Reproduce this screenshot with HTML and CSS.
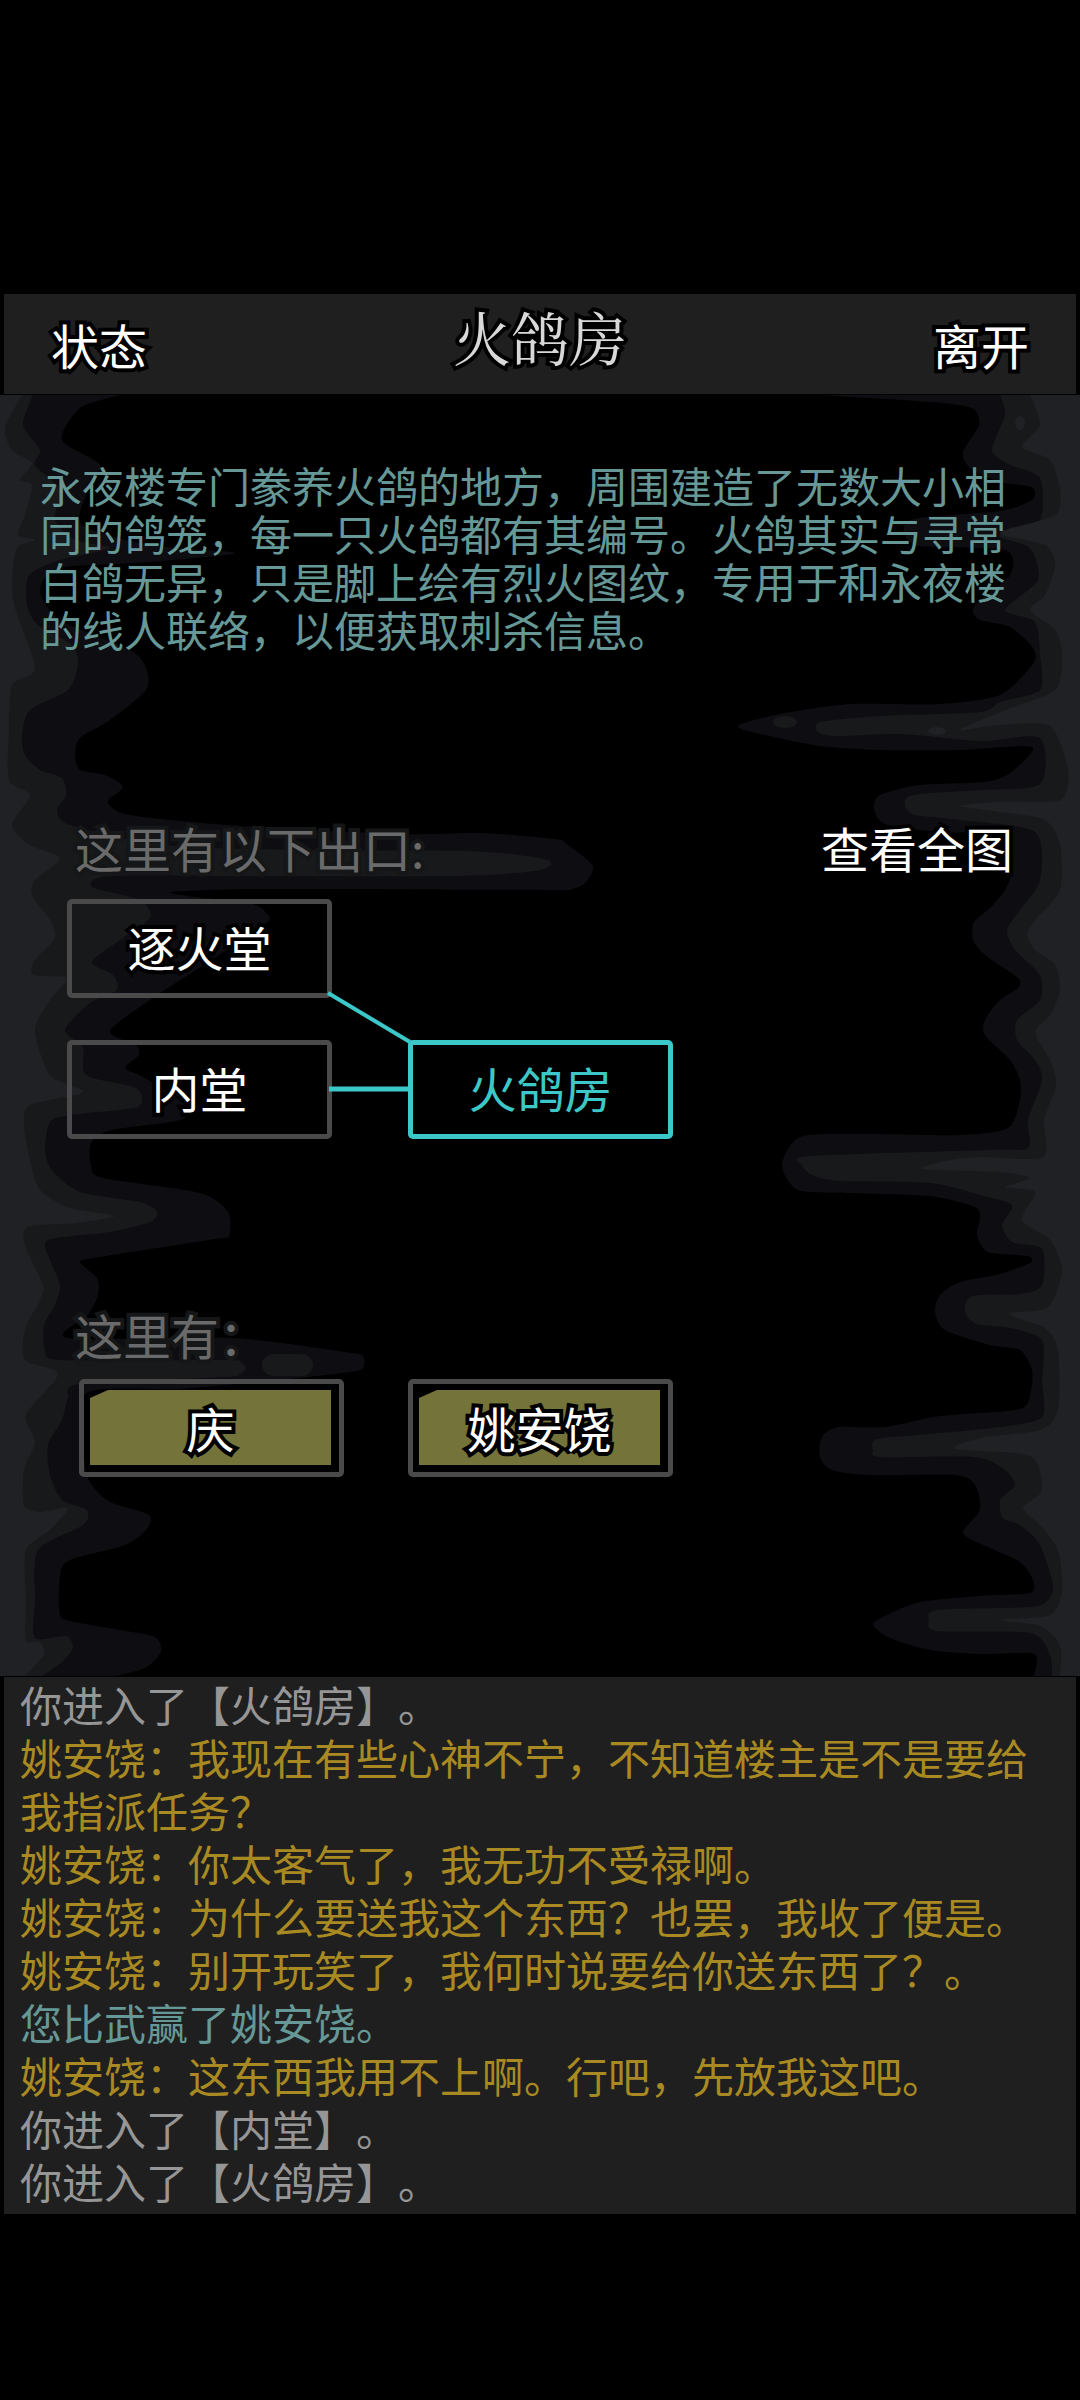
FILE: index.html
```html
<!DOCTYPE html>
<html lang="zh-CN">
<head>
    <meta charset="UTF-8">
    <meta name="viewport" content="width=device-width, initial-scale=1.0">
    <title>火鸽房</title>
    <link rel="stylesheet" href="styles.css">
</head>

<body>
    <!-- 顶部栏 -->
    <header class="topbar">
        <button type="button" class="text-btn">状态</button>
        <h1>火鸽房</h1>
        <button type="button" class="text-btn">离开</button>
    </header>

    <!-- 场景 -->
    <main class="scene">
        <svg class="cave" viewBox="0 395 1080 1281" preserveAspectRatio="none" aria-hidden="true">
            <g id="cave"></g>
            <rect x="262" y="1354" width="51" height="22" rx="12" fill="#18191b"/>
            <ellipse cx="785" cy="722" rx="12" ry="6" fill="#18191b"/>
            <ellipse cx="937" cy="731" rx="9" ry="4" fill="#1f2124"/>
            <ellipse cx="1020" cy="423" rx="5" ry="7" fill="#1f2124"/>
        </svg>

        <p class="desc">永夜楼专门豢养火鸽的地方，周围建造了无数大小相同的鸽笼，每一只火鸽都有其编号。火鸽其实与寻常白鸽无异，只是脚上绘有烈火图纹，专用于和永夜楼的线人联络，以便获取刺杀信息。</p>

        <section class="exits">
            <div class="section-head">
                <h2>这里有以下出口:</h2>
                <button type="button" class="text-btn">查看全图</button>
            </div>
            <div class="map">
                <svg class="links" viewBox="0 0 605 240" aria-hidden="true">
                    <path d="M261 94L343 143" stroke-width="4"/>
                    <path d="M262 190H343" stroke-width="5"/>
                </svg>
                <button type="button" class="box">逐火堂</button>
                <button type="button" class="box row-2">内堂</button>
                <button type="button" class="box row-2 current">火鸽房</button>
            </div>
        </section>

        <section class="people">
            <h2>这里有：</h2>
            <div class="people-list">
                <button type="button" class="box person"><span>庆</span></button>
                <button type="button" class="box person"><span>姚安饶</span></button>
            </div>
        </section>
    </main>

    <!-- 消息记录 -->
    <section class="log">
        <p>你进入了【火鸽房】。</p>
        <p class="talk">姚安饶：我现在有些心神不宁，不知道楼主是不是要给我指派任务？</p>
        <p class="talk">姚安饶：你太客气了，我无功不受禄啊。</p>
        <p class="talk">姚安饶：为什么要送我这个东西？也罢，我收了便是。</p>
        <p class="talk">姚安饶：别开玩笑了，我何时说要给你送东西了？。</p>
        <p class="win">您比武赢了姚安饶。</p>
        <p class="talk">姚安饶：这东西我用不上啊。行吧，先放我这吧。</p>
        <p>你进入了【内堂】。</p>
        <p>你进入了【火鸽房】。</p>
    </section>

<script>
    // 洞壁轮廓，从外到内三层，左右各一条
    const layers = [
        { side: 0, color: '#0e0d12', points: '120,395 80,408 62,440 100,465 88,490 82,525 150,545 235,553 150,562 60,568 40,590 60,620 130,650 146,668 146,690 110,720 80,738 75,755 80,770 105,775 123,787 108,802 130,815 240,826 400,834 480,833 555,839 568,845 593,866 585,883 572,889 550,890 260,889 172,892 195,897 250,903 267,914 264,925 185,977 150,1000 110,1031 137,1046 138,1056 125,1068 145,1078 185,1105 180,1120 112,1130 91,1143 91,1166 103,1178 200,1193 228,1212 229,1236 215,1239 100,1257 80,1262 97,1278 98,1295 88,1315 68,1338 232,1338 345,1352 363,1356 363,1368 350,1372 280,1380 180,1389 85,1394 85,1465 92,1485 110,1502 149,1515 146,1530 125,1545 70,1560 60,1575 60,1615 75,1622 120,1630 155,1637 161,1652 145,1668 115,1676' },
        { side: 0, color: '#18191b', points: '33,395 23,425 40,450 35,465 60,490 55,520 75,540 110,548 60,560 29,575 27,605 38,625 72,645 78,665 68,690 30,710 22,735 25,755 40,770 62,778 66,795 57,810 70,825 160,845 300,850 469,851 540,858 551,864 535,871 460,876 250,876 110,876 92,887 140,900 150,918 120,940 92,962 113,975 117,990 90,1003 65,1030 83,1047 86,1075 134,1087 142,1098 134,1108 70,1115 50,1122 45,1150 52,1170 80,1192 140,1202 157,1212 150,1222 110,1232 48,1240 50,1260 60,1285 55,1305 44,1325 45,1350 62,1360 225,1360 240,1362 246,1368 240,1374 225,1377 80,1384 68,1398 62,1420 48,1445 50,1475 62,1500 87,1510 83,1525 38,1550 35,1600 35,1638 66,1636 73,1648 62,1662 42,1676' },
        { side: 0, color: '#1f2124', points: '22,395 5,428 12,450 32,463 20,480 32,485 25,515 18,535 35,540 16,550 13,600 35,668 12,685 9,730 9,780 30,795 12,825 30,845 60,858 35,880 32,895 50,920 55,938 35,960 33,975 67,978 50,1000 35,1030 50,1075 83,1092 30,1105 24,1125 30,1160 40,1190 70,1208 115,1216 75,1223 28,1227 25,1245 43,1285 40,1300 25,1330 25,1360 58,1374 26,1415 35,1442 24,1470 24,1505 40,1512 68,1508 50,1530 26,1550 26,1600 26,1640 40,1642 44,1655 25,1676' },
        { side: 1080, color: '#0e0d12', points: '820,395 930,402 972,408 979,425 963,452 970,468 1000,482 1032,487 1032,500 1000,511 910,520 915,545 1005,550 1010,575 975,605 978,619 1010,627 1033,648 1033,664 1000,695 940,704 850,704 780,714 738,726 765,735 820,746 880,750 960,750 1032,747 1010,773 985,782 920,785 880,795 874,808 885,824 940,832 1005,835 1012,870 1005,890 990,908 974,922 973,940 985,955 1018,978 1018,988 1000,1000 985,1020 985,1035 1010,1060 1020,1080 1020,1100 1008,1128 960,1135 860,1134 800,1137 782,1165 798,1190 850,1193 930,1196 975,1207 980,1218 977,1235 988,1252 1028,1256 1030,1263 1000,1274 960,1282 940,1295 935,1312 945,1330 990,1345 1020,1350 1032,1370 1031,1390 1020,1409 940,1416 885,1427 838,1427 822,1437 820,1457 832,1470 870,1475 955,1475 975,1485 980,1510 963,1533 990,1548 1020,1562 1033,1580 1030,1593 980,1596 920,1602 885,1616 873,1625 890,1638 930,1650 980,1654 1034,1654 1034,1676' },
        { side: 1080, color: '#18191b', points: '1000,395 1005,415 992,450 1010,465 1040,478 1040,520 1010,528 1000,537 1030,548 1038,580 1005,610 1035,622 1040,655 1040,690 1000,702 980,712 880,716 820,722 818,732 835,736 900,734 980,741 1040,738 1040,784 980,790 912,795 905,806 915,815 960,820 1035,832 1040,880 1020,910 1007,930 1015,950 1040,975 1040,1000 1017,1020 1017,1040 1035,1060 1042,1080 1028,1120 1028,1148 990,1150 810,1156 802,1165 812,1175 840,1181 930,1183 980,1195 1012,1205 1002,1225 1012,1242 1042,1249 1042,1285 1020,1294 972,1296 965,1312 977,1324 1010,1328 1042,1340 1042,1380 1042,1417 1000,1427 930,1434 877,1439 873,1450 880,1457 975,1457 1005,1470 1015,1485 1000,1500 1003,1518 1020,1525 1040,1545 1053,1585 1048,1600 1030,1607 937,1610 929,1620 937,1631 1030,1633 1050,1655 1052,1676' },
        { side: 1080, color: '#1f2124', points: '1030,395 1040,425 1022,447 1050,460 1060,490 1055,515 1000,533 1045,545 1055,565 1045,595 1030,610 1055,630 1062,655 1055,690 1000,712 960,730 1000,725 1050,726 1068,770 1060,800 1000,802 960,806 1000,812 1045,820 1060,845 1060,890 1035,920 1027,935 1035,950 1055,965 1060,990 1050,1015 1035,1032 1050,1060 1056,1085 1044,1120 1043,1157 980,1157 950,1160 922,1169 1000,1172 1030,1178 1005,1187 1035,1192 1022,1220 1050,1240 1062,1270 1048,1307 1010,1313 1020,1319 1045,1328 1058,1350 1058,1410 1040,1430 980,1438 955,1449 1030,1456 1042,1490 1023,1508 1040,1525 1058,1550 1062,1590 1050,1615 1000,1620 1040,1626 1060,1645 1060,1676' }
    ];

    // 用平滑曲线连接各点，再沿屏幕边缘闭合
    function smoothPath(points, side) {
        const p = points.split(' ').map(s => s.split(',').map(Number));
        let d = `M${side} 395L${p[0]}`;
        for (let i = 0; i < p.length - 1; i++) {
            const a = p[i - 1] || p[i], b = p[i], c = p[i + 1], e = p[i + 2] || c;
            d += `C${b[0] + (c[0] - a[0]) / 8} ${b[1] + (c[1] - a[1]) / 8} ${c[0] - (e[0] - b[0]) / 8} ${c[1] - (e[1] - b[1]) / 8} ${c}`;
        }
        return d + `L${side} 1676Z`;
    }

    document.getElementById('cave').innerHTML = layers
        .map(l => `<path fill="${l.color}" d="${smoothPath(l.points, l.side)}"/>`)
        .join('');
</script>
</body>
</html>
```
FILE: styles.css
```css
* {
    box-sizing: border-box;
}

body {
    margin: 0;
    padding: 294px 0 186px;
    background: #000;
    color: #fff;
    font-family: "Noto Sans CJK SC", sans-serif;
    font-size: 42px;
    text-spacing-trim: space-all;
}

h1, h2, p {
    margin: 0;
    font-weight: normal;
}

button {
    padding: 0;
    border: none;
    background: none;
    color: #fff;
    font-family: inherit;
    font-size: 48px;
    line-height: 60px;
    cursor: pointer;
    -webkit-text-stroke: 8px #000;
    paint-order: stroke fill;
    stroke-linejoin: round;
}

/* 顶部栏 */
.topbar {
    display: flex;
    justify-content: space-between;
    align-items: center;
    height: 100px;
    margin: 0 4px;
    padding: 0 47px;
    background: #1f1f1f;
}

.topbar h1 {
    padding-bottom: 16px;
    color: #d8d8d8;
    font-family: "KaiTi", "Kaiti SC", "Noto Serif CJK SC", "Noto Sans CJK SC", serif;
    font-size: 58px;
    line-height: 70px;
    -webkit-text-stroke: 8px #000;
    paint-order: stroke fill;
    stroke-linejoin: round;
}

/* 场景 */
.scene {
    position: relative;
    margin-top: 1px;
    padding: 66px 67px 199px;
}

.cave {
    position: absolute;
    left: 0;
    top: 0;
    width: 100%;
    height: 100%;
    z-index: -1;
}

.desc {
    margin: 0 -27px;
    color: #659896;
    line-height: 48px;
}

h2 {
    color: #6a6a6a;
    font-size: 48px;
    line-height: 60px;
    -webkit-text-stroke: 8px #151617;
    paint-order: stroke fill;
    stroke-linejoin: round;
}

.exits {
    margin-top: 164px;
}

.section-head {
    display: flex;
    justify-content: space-between;
    margin-bottom: 22px;
    padding-left: 8px;
}

.map {
    position: relative;
    display: grid;
    grid-template-columns: 265px 265px;
    grid-auto-rows: 99px;
    gap: 42px 76px;
}

.links {
    position: absolute;
    left: 0;
    top: 0;
    width: 605px;
    height: 240px;
    stroke: #3cc8c8;
    z-index: 1;
    pointer-events: none;
}

.box {
    height: 99px;
    padding-bottom: 5px;
    border: 5px solid #4a4a4a;
    border-radius: 5px;
}

.row-2 {
    grid-row: 2;
}

.current {
    border-color: #3cc8c8;
    color: #3cc8c8;
}

/* 人物 */
.people {
    margin-top: 165px;
}

.people h2 {
    padding-left: 8px;
}

.people-list {
    display: flex;
    gap: 64px;
    margin: 15px 0 0 12px;
}

.person {
    width: 265px;
    height: 98px;
    padding: 6px 8px 7px 6px;
}

.person span {
    display: block;
    height: 75px;
    background: #73733a;
    clip-path: polygon(0 8px, 18px 0, 100% 0, 100% 100%, 0 100%);
    line-height: 74px;
}

/* 消息记录 */
.log {
    margin: 1px 4px 0;
    padding: 0 16px 7px;
    background: #1f1f1f;
    color: #969696;
    line-height: 53px;
}

.talk {
    color: #a98a22;
}

.win {
    color: #659896;
}
```
